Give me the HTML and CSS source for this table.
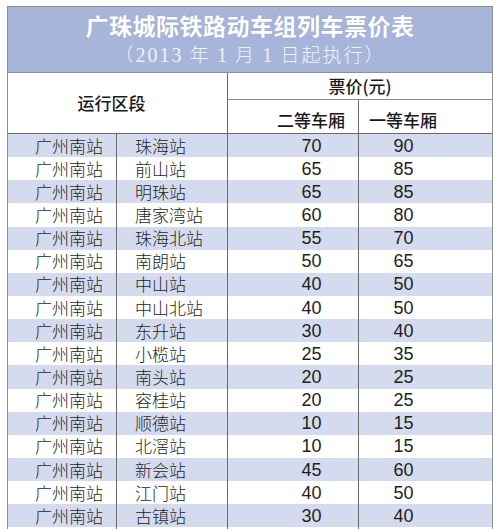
FILE: index.html
```html
<!DOCTYPE html>
<html lang="zh">
<head>
<meta charset="utf-8">
<title>广珠城际铁路动车组列车票价表</title>
<link rel="stylesheet" href="styles.css">
</head>
<body>
<table class="fare">
  <colgroup>
    <col class="c1"><col class="c2"><col class="c3"><col class="c4">
  </colgroup>
  <thead>
    <tr class="title-row">
      <th colspan="4">
        <div class="title">广珠城际铁路动车组列车票价表</div>
        <div class="subtitle">（<span class="num">2013</span> 年 <span class="num">1</span> 月 <span class="num">1</span> 日起执行）</div>
      </th>
    </tr>
    <tr class="head1">
      <th colspan="2" rowspan="2" class="section">运行区段</th>
      <th colspan="2" class="price">票价(元)</th>
    </tr>
    <tr class="head2">
      <th class="second">二等车厢</th>
      <th class="first">一等车厢</th>
    </tr>
  </thead>
  <tbody>
    <tr><td class="from">广州南站</td><td class="to">珠海站</td><td class="p2">70</td><td class="p1">90</td></tr>
    <tr><td class="from">广州南站</td><td class="to">前山站</td><td class="p2">65</td><td class="p1">85</td></tr>
    <tr><td class="from">广州南站</td><td class="to">明珠站</td><td class="p2">65</td><td class="p1">85</td></tr>
    <tr><td class="from">广州南站</td><td class="to">唐家湾站</td><td class="p2">60</td><td class="p1">80</td></tr>
    <tr><td class="from">广州南站</td><td class="to">珠海北站</td><td class="p2">55</td><td class="p1">70</td></tr>
    <tr><td class="from">广州南站</td><td class="to">南朗站</td><td class="p2">50</td><td class="p1">65</td></tr>
    <tr><td class="from">广州南站</td><td class="to">中山站</td><td class="p2">40</td><td class="p1">50</td></tr>
    <tr><td class="from">广州南站</td><td class="to">中山北站</td><td class="p2">40</td><td class="p1">50</td></tr>
    <tr><td class="from">广州南站</td><td class="to">东升站</td><td class="p2">30</td><td class="p1">40</td></tr>
    <tr><td class="from">广州南站</td><td class="to">小榄站</td><td class="p2">25</td><td class="p1">35</td></tr>
    <tr><td class="from">广州南站</td><td class="to">南头站</td><td class="p2">20</td><td class="p1">25</td></tr>
    <tr><td class="from">广州南站</td><td class="to">容桂站</td><td class="p2">20</td><td class="p1">25</td></tr>
    <tr><td class="from">广州南站</td><td class="to">顺德站</td><td class="p2">10</td><td class="p1">15</td></tr>
    <tr><td class="from">广州南站</td><td class="to">北滘站</td><td class="p2">10</td><td class="p1">15</td></tr>
    <tr><td class="from">广州南站</td><td class="to">新会站</td><td class="p2">45</td><td class="p1">60</td></tr>
    <tr><td class="from">广州南站</td><td class="to">江门站</td><td class="p2">40</td><td class="p1">50</td></tr>
    <tr><td class="from">广州南站</td><td class="to">古镇站</td><td class="p2">30</td><td class="p1">40</td></tr>
    <tr><td class="from"></td><td class="to"></td><td class="p2"></td><td class="p1"></td></tr>
  </tbody>
</table>
</body>
</html>
```

FILE: styles.css
```css
html, body {
  margin: 0;
  padding: 0;
  background: #ffffff;
}
body {
  font-family: "Noto Sans CJK SC", "Liberation Sans", sans-serif;
  color: #1e1e1e;
}
.fare {
  margin: 6px 0 0 7px;
  width: 485px;
  table-layout: fixed;
  border-collapse: collapse;
  border: 1px solid #8c8f96;
}
.c1 { width: 109px; }
.c2 { width: 111px; }
.c3 { width: 131px; }
.c4 { width: 134px; }

.fare th, .fare td {
  padding: 0;
}

.title-row th {
  background: #a7b5da;
  height: 65px;
  border-bottom: 1px solid #8a90a4;
  text-align: center;
  vertical-align: top;
}
.title {
  margin-top: 4px;
  font-size: 23px;
  line-height: 28px;
  font-weight: 700;
  letter-spacing: 0.5px;
  color: #ffffff;
  text-shadow: 0 0 1px rgba(120, 130, 160, 0.5);
}
.subtitle {
  margin-top: 3px;
  font-size: 19px;
  line-height: 24px;
  font-weight: 300;
  letter-spacing: 2px;
  color: #eef1f8;
}
.subtitle .num {
  font-family: "Liberation Serif", serif;
  font-size: 20px;
}

.head1 th, .head2 th {
  background: #ffffff;
  font-size: 17px;
  line-height: 22px;
  font-weight: 500;
  color: #1a1a1a;
  vertical-align: middle;
}
.head1 th { height: 26px; }
.head2 th {
  height: 27px;
  padding-top: 6px;
  border-bottom: 1px solid #6a6a6a;
}
.section {
  text-align: center;
  padding-right: 12px !important;
  border-right: 1px solid #6a6a6a;
  border-bottom: 1px solid #6a6a6a;
}
.price {
  text-align: center;
  border-bottom: 1px solid #8a8a8a;
}
.second {
  text-align: center;
  padding-left: 36px !important;
  border-right: 1px solid #6a6a6a;
}
.first {
  text-align: center;
  padding-right: 45px !important;
}

.fare tbody td {
  height: 23.15px;
  line-height: 22px;
  font-size: 17px;
  font-weight: 300;
  color: #1e1e1e;
  white-space: nowrap;
}
.fare tbody tr:nth-child(odd) td {
  background: #d5dbee;
}
.fare tbody tr:nth-child(even) td {
  background: #ffffff;
}
.from {
  text-align: left;
  padding-left: 27px !important;
  border-right: 1px solid #6a6a6a;
}
.to {
  text-align: left;
  padding-left: 18px !important;
  border-right: 1px solid #6a6a6a;
}
.fare tbody .p2, .fare tbody .p1 {
  font-family: "Liberation Sans", sans-serif;
  font-size: 18px;
  font-weight: 400;
  text-align: center;
}
.p2 {
  padding-left: 37px !important;
  border-right: 1px solid #6a6a6a;
}
.p1 {
  padding-right: 44px !important;
}
```
